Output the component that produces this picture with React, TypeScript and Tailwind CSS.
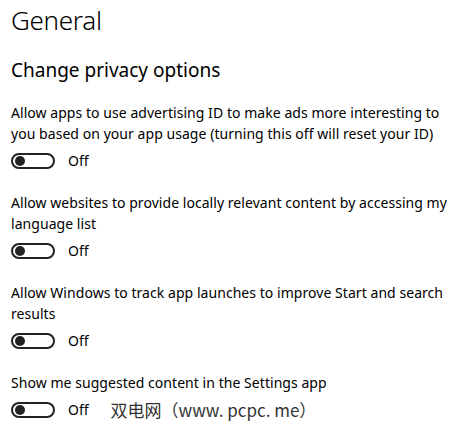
const items = [
  "Allow apps to use advertising ID to make ads more interesting to you based on your app usage (turning this off will reset your ID)",
  "Allow websites to provide locally relevant content by accessing my language list",
  "Allow Windows to track app launches to improve Start and search results",
  "Show me suggested content in the Settings app",
];

function Toggle() {
  return (
    <div className="flex h-[16px] w-[44px] items-center rounded-full border-2 border-[#222] pl-[2px]">
      <div className="h-[10px] w-[10px] rounded-full bg-[#222]" />
    </div>
  );
}

export default function App() {
  return (
    <div className="h-[435px] w-[459px] overflow-hidden bg-white pl-[11px] font-['Noto_Sans',sans-serif] text-black">
      <h1 className="text-[26px] font-light leading-[40px] tracking-[-0.3px]">General</h1>
      <h2 className="mt-[16px] text-[19px] leading-[28px]">Change privacy options</h2>

      <div className="mt-[18px] flex flex-col gap-[21px] pr-[8px]">
        {items.map((text, i) => (
          <div key={i}>
            <p className="text-[14px] leading-[21px] tracking-[0.05px]">{text}</p>
            <div className="mt-[7px] flex h-[20px] items-center">
              <Toggle />
              <span className="ml-[13px] text-[14px] leading-[20px]">Off</span>
              {i === items.length - 1 && (
                <span className="ml-[22px] font-['Noto_Sans_CJK_SC',sans-serif] text-[17px] leading-[20px] text-[#333]">
                  双电网（www. pcpc. me）
                </span>
              )}
            </div>
          </div>
        ))}
      </div>
    </div>
  );
}
